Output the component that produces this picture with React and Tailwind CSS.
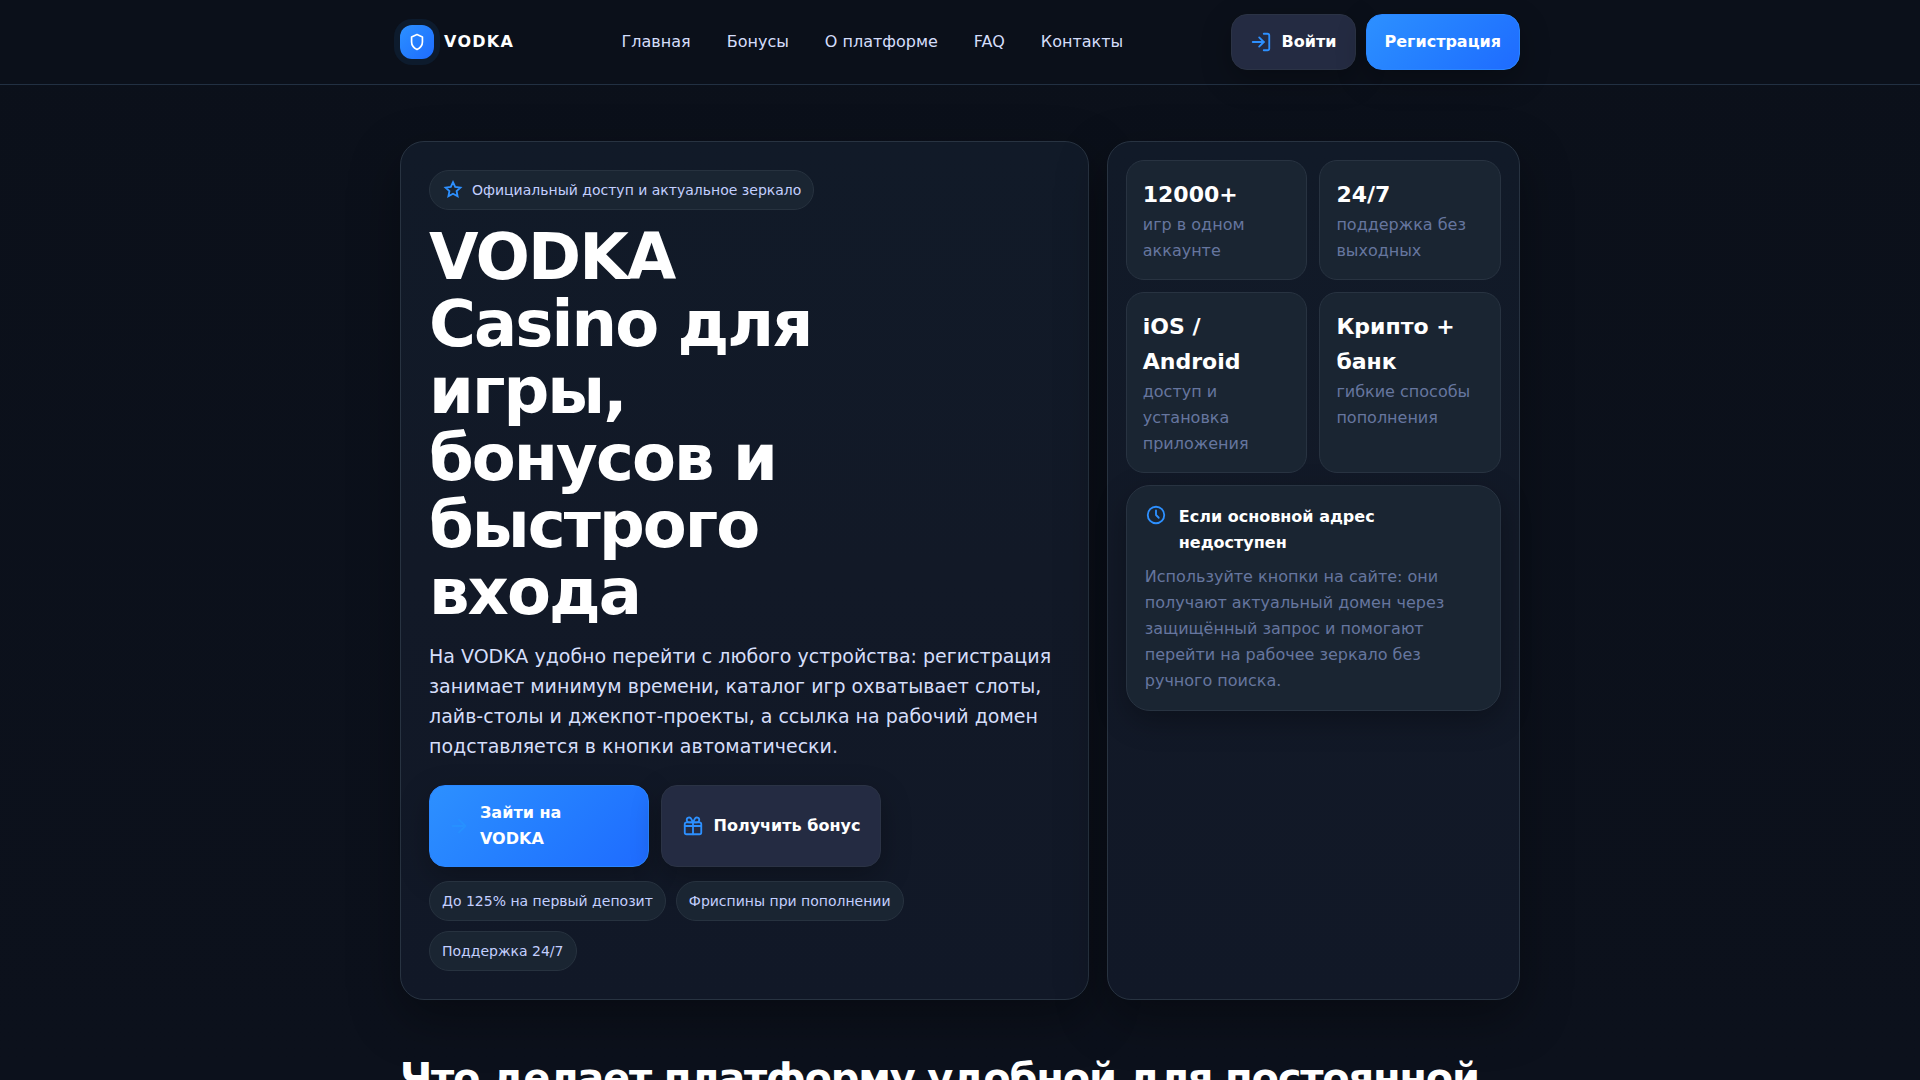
import { ArrowRight, LogIn } from 'lucide-react';

const navLinks = ['Главная', 'Бонусы', 'О платформе', 'FAQ', 'Контакты'];

const perks = ['До 125% на первый депозит', 'Фриспины при пополнении', 'Поддержка 24/7'];

const stats = [
  { value: '12000+', label: 'игр в одном аккаунте' },
  { value: '24/7', label: 'поддержка без выходных' },
  { value: 'iOS / Android', label: 'доступ и установка приложения' },
  { value: 'Крипто + банк', label: 'гибкие способы пополнения' },
];

const card =
  'rounded-3xl border border-[#283341] bg-linear-to-b from-[#111a28] via-[#121927] to-[#111827] shadow-[0_18px_50px_rgba(0,0,0,0.35)]';
const button =
  'flex items-center justify-center gap-2.5 rounded-2xl border px-[18px] py-3.5 text-left font-bold leading-[26px] text-white shadow-[0_10px_30px_rgba(0,0,0,0.28)]';
const primary = 'border-[#2a86ff] bg-linear-135 from-[#2d90ff] to-[#1f6bff]';
const secondary = 'border-[#2b3345] bg-[#242b42]';
const chip =
  'inline-flex items-center gap-2 rounded-full border border-[#27323f] bg-[#1a2532] px-3 py-2 text-sm leading-[22px] text-[#c3cfff]';

function Icon({ className = 'size-[22px] shrink-0 text-[#2d90ff]', children }) {
  return (
    <svg
      viewBox="0 0 24 24"
      className={className}
      fill="none"
      stroke="currentColor"
      strokeWidth="2"
      strokeLinecap="round"
      strokeLinejoin="round"
      aria-hidden="true"
    >
      {children}
    </svg>
  );
}

function Logo() {
  return (
    <a href="#" className="flex items-center gap-2.5 font-extrabold tracking-[0.08em] text-white">
      <span className="flex size-[34px] items-center justify-center rounded-xl bg-linear-135 from-[#2d90ff] to-[#1f6bff] shadow-[0_0_0_6px_#0d1b2d]">
        <Icon className="size-5">
          <path d="M12 3l6.5 3v6c0 4-2.5 7-6.5 9-4-2-6.5-5-6.5-9V6L12 3z" />
        </Icon>
      </span>
      VODKA
    </a>
  );
}

function Header() {
  return (
    <header className="border-b border-[#223042] bg-[#0b101a]">
      <div className="mx-auto flex max-w-[1120px] items-center justify-between py-3.5">
        <Logo />
        <nav className="flex gap-9 text-[#d5defa]">
          {navLinks.map((link) => (
            <a key={link} href="#">
              {link}
            </a>
          ))}
        </nav>
        <div className="flex gap-2.5">
          <button className={`${button} ${secondary}`}>
            <LogIn className="size-[22px] text-[#2d90ff]" />
            Войти
          </button>
          <button className={`${button} ${primary}`}>Регистрация</button>
        </div>
      </div>
    </header>
  );
}

function Hero() {
  return (
    <section className={`${card} flex flex-col items-start p-7`}>
      <div className={chip}>
        <Icon>
          <path
            strokeLinejoin="miter"
            d="M12 3.5l2.4 5.2 5.7.7-4.2 3.9 1.1 5.6-5-2.8-5 2.8 1.1-5.6-4.2-3.9 5.7-.7z"
          />
        </Icon>
        Официальный доступ и актуальное зеркало
      </div>
      <h1 className="mt-3.5 max-w-md text-[64px] leading-[67px] font-extrabold tracking-[-0.03em] text-white">
        VODKA Casino для игры, бонусов и быстрого входа
      </h1>
      <p className="mt-[15px] text-[19px] leading-[30px] text-[#d5defa]">
        На VODKA удобно перейти с любого устройства: регистрация занимает минимум времени, каталог игр
        охватывает слоты, лайв-столы и джекпот-проекты, а ссылка на рабочий домен подставляется в кнопки
        автоматически.
      </p>
      <div className="mt-6 flex gap-3">
        <button className={`${button} ${primary} w-[220px]`}>
          <ArrowRight className="size-[22px] shrink-0 text-[#2790ff]" />
          <span className="flex-1">Зайти на VODKA</span>
        </button>
        <button className={`${button} ${secondary} w-[220px]`}>
          <Icon>
            <rect x="3" y="8" width="18" height="13" rx="2" />
            <path d="M3 12h18M12 8v13M12 8H7.8a2.6 2.6 0 1 1 2.3-3.8L12 8zM12 8h4.2a2.6 2.6 0 1 0-2.3-3.8L12 8z" />
          </Icon>
          Получить бонус
        </button>
      </div>
      <ul className="mt-3.5 flex flex-wrap gap-2.5">
        {perks.map((perk) => (
          <li key={perk} className={chip}>
            {perk}
          </li>
        ))}
      </ul>
    </section>
  );
}

function Sidebar() {
  return (
    <aside className={`${card} p-[18px]`}>
      <div className="grid grid-cols-2 gap-3">
        {stats.map((stat) => (
          <div key={stat.value} className="rounded-[18px] border border-[#283341] bg-[#1a2532] px-4 pt-4 pb-[15px]">
            <strong className="block text-[22px] leading-[35px] text-white">{stat.value}</strong>
            <span className="block leading-[26px] text-[#66769f]">{stat.label}</span>
          </div>
        ))}
      </div>
      <div className="mt-3 rounded-3xl border border-[#283341] bg-[#1a2532] px-[18px] pt-[18px] pb-4 shadow-[0_10px_30px_rgba(0,0,0,0.28)]">
        <div className="flex items-start gap-3">
          <Icon>
            <circle cx="12" cy="12" r="9" />
            <path d="M12 7v5l3 3" />
          </Icon>
          <h2 className="leading-[26px] font-bold text-white">Если основной адрес недоступен</h2>
        </div>
        <p className="mt-2 leading-[26px] text-[#66769f]">
          Используйте кнопки на сайте: они получают актуальный домен через защищённый запрос и помогают
          перейти на рабочее зеркало без ручного поиска.
        </p>
      </div>
    </aside>
  );
}

export default function App() {
  return (
    <div className="h-screen overflow-hidden bg-linear-to-b from-[#0b101a] to-[#0c111c] font-['DejaVu_Sans',sans-serif] text-base leading-[26px]">
      <Header />
      <main className="mx-auto max-w-[1120px] pt-14">
        <div className="grid grid-cols-[5fr_3fr] gap-[18px]">
          <Hero />
          <Sidebar />
        </div>
        <h2 className="mt-14 text-[40px] leading-[44px] font-extrabold tracking-[-0.03em] text-white">
          Что делает платформу удобной для постоянной
        </h2>
      </main>
    </div>
  );
}
